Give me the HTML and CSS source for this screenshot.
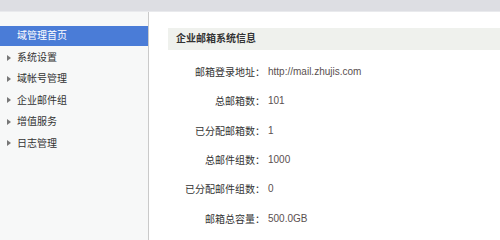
FILE: index.html
```html
<!DOCTYPE html>
<html lang="zh-CN">
<head>
	<meta charset="UTF-8">
	<title>域管理首页</title>
	<link rel="stylesheet" href="styles.css">
</head>
<body>
	<div class="topbar"></div>
	<div class="main">
		<ul class="menu">
			<li class="active">域管理首页</li>
			<li><span class="arrow"></span>系统设置</li>
			<li><span class="arrow"></span>域帐号管理</li>
			<li><span class="arrow"></span>企业邮件组</li>
			<li><span class="arrow"></span>增值服务</li>
			<li><span class="arrow"></span>日志管理</li>
		</ul>
		<div class="content">
			<h2 class="title">企业邮箱系统信息</h2>
			<dl class="info">
				<dt>邮箱登录地址：</dt><dd>http://mail.zhujis.com</dd>
				<dt>总邮箱数：</dt><dd>101</dd>
				<dt>已分配邮箱数：</dt><dd>1</dd>
				<dt>总邮件组数：</dt><dd>1000</dd>
				<dt>已分配邮件组数：</dt><dd>0</dd>
				<dt>邮箱总容量：</dt><dd>500.0GB</dd>
			</dl>
		</div>
	</div>
</body>
</html>
```
FILE: styles.css
```css
html, body {
	height: 100%;
}
body {
	margin: 0;
	font-family: "Liberation Sans", "Noto Sans CJK SC", sans-serif;
	font-size: 10px;
	color: #333;
	background: #fff;
	display: flex;
	flex-direction: column;
}
.topbar {
	height: 11px;
	background: #dddee3;
	border-bottom: 1px solid #e9eaed;
	flex: none;
}
.main {
	flex: 1;
	display: flex;
}
.menu {
	width: 148px;
	margin: 0;
	padding: 14px 0 0;
	list-style: none;
	background: #f7f8f8;
	border-right: 1px solid #cacaca;
	flex: none;
}
.menu li {
	height: 21.4px;
	line-height: 21.4px;
	padding-left: 7px;
	display: flex;
	align-items: center;
	color: #333;
}
.menu li.active {
	background: #4a7cd7;
	color: #fff;
	padding-left: 17px;
	height: 20px;
	line-height: 20px;
	margin-bottom: 1px;
}
.arrow {
	width: 0;
	height: 0;
	border-top: 3px solid transparent;
	border-bottom: 3px solid transparent;
	border-left: 4px solid #777;
	margin-right: 6px;
}
.content {
	flex: 1;
	padding: 16px 0 0 19px;
}
.title {
	margin: 0;
	height: 22px;
	line-height: 22px;
	padding-left: 8px;
	font-size: 10px;
	font-weight: bold;
	color: #333;
	background: #eff1ed;
}
.info {
	margin: 7px 0 0;
	display: grid;
	grid-template-columns: 97px auto;
	grid-auto-rows: 29.3px;
	align-items: center;
}
.info dt {
	text-align: right;
	color: #333;
}
.info dd {
	margin: 0;
	padding-left: 3px;
	color: #5a4f4f;
}
```
